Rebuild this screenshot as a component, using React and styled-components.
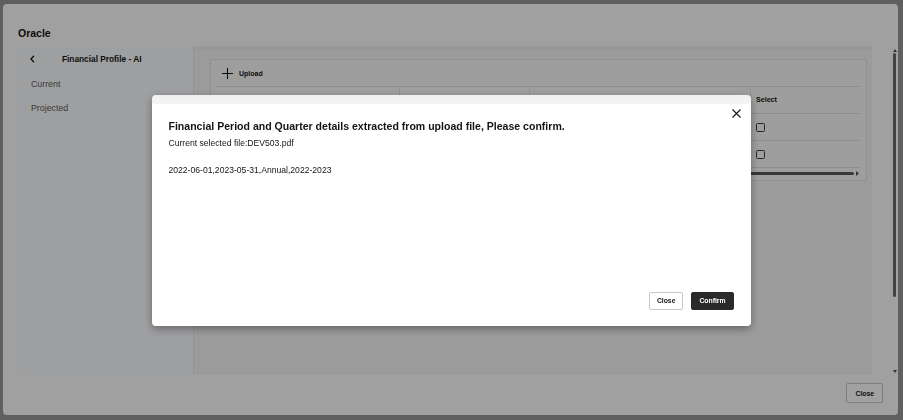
import React from "react";
import styled, { createGlobalStyle } from "styled-components";

const GlobalStyle = createGlobalStyle`
  html, body {
    margin: 0;
    padding: 0;
  }
  body {
    background: #979797;
    font-family: "Liberation Sans", Arial, sans-serif;
    color: #161513;
  }
  * {
    box-sizing: border-box;
  }
`;

const Screen = styled.div`
  height: 420px;
  padding: 4px 5px 5px 3px;
`;

const Dialog = styled.div`
  height: 100%;
  background: #fffdfd;
  border-radius: 4px;
  display: flex;
  flex-direction: column;
  overflow: hidden;
`;

const DialogHeader = styled.div`
  height: 42px;
  flex-shrink: 0;
  padding: 23px 15px 0;
`;

const DialogTitle = styled.div`
  font-size: 10.5px;
  font-weight: 700;
  line-height: 12px;
`;

const DialogBody = styled.div`
  flex: 1;
  display: flex;
  padding-left: 15px;
  min-height: 0;
`;

const Sidebar = styled.div`
  width: 175px;
  flex-shrink: 0;
  background: #fbfcff;
  padding-top: 4px;
`;

const BackRow = styled.div`
  display: flex;
  align-items: center;
  height: 18px;
  padding-left: 12px;
`;

const BackTitle = styled.div`
  margin-left: 27px;
  font-size: 8.3px;
  font-weight: 700;
`;

const NavItem = styled.div`
  height: 24px;
  display: flex;
  align-items: center;
  padding-left: 13px;
  font-size: 8.8px;
  color: #5e5c5a;
  margin-top: ${(p) => (p.$first ? "4px" : "0")};
`;

const Content = styled.div`
  width: 679px;
  flex-shrink: 0;
  background: #f6f5f5;
  border-left: 1px solid #ebeaea;
  border-top: 4px solid #f2f1f1;
  padding: 9px 5px 0 16px;
`;

const Card = styled.div`
  height: 122px;
  background: #fbfafa;
  border: 1px solid #e6e5e5;
  border-radius: 2px;
  padding: 0 6px 0 5px;
`;

const Toolbar = styled.div`
  height: 26px;
  display: flex;
  align-items: center;
  padding-left: 6px;
  gap: 6px;
`;

const ToolLabel = styled.span`
  font-size: 7px;
  font-weight: 700;
`;

const Table = styled.div`
  display: grid;
  grid-template-columns: 184px 130px 221px 1fr;
  border-top: 1px solid #e2e1e1;
`;

const Cell = styled.div`
  height: 27px;
  display: flex;
  align-items: center;
  padding-left: 5px;
  border-bottom: 1px solid #e2e1e1;
  border-right: ${(p) => (p.$last ? "none" : "1px solid #e8e7e7")};
  font-size: 7.1px;
  font-weight: 700;
`;

const Checkbox = styled.span`
  width: 9px;
  height: 9px;
  border: 1px solid #3d3c3b;
  border-radius: 1.5px;
`;

const HScroll = styled.div`
  display: flex;
  align-items: center;
  justify-content: flex-end;
  height: 10px;
  gap: 2px;
`;

const HThumb = styled.div`
  width: 330px;
  height: 3px;
  background: #5a5958;
  border-radius: 2px;
`;

const Gutter = styled.div`
  flex: 1;
  display: flex;
  justify-content: flex-end;
  padding-right: 1px;
`;

const VScroll = styled.div`
  width: 5px;
  display: flex;
  flex-direction: column;
  align-items: center;
  padding-top: 3px;
`;

const VThumb = styled.div`
  width: 3px;
  height: 244px;
  margin-top: 1px;
  background: #6b6a69;
  border-radius: 2px;
`;

const Arrow = styled.div`
  width: 0;
  height: 0;
  border-left: 2px solid transparent;
  border-right: 2px solid transparent;
  ${(p) =>
    p.$down
      ? "border-top: 3px solid #555; margin-top: auto; margin-bottom: 2px;"
      : "border-bottom: 3px solid #555;"}
`;

const Footer = styled.div`
  height: 40px;
  flex-shrink: 0;
  display: flex;
  justify-content: flex-end;
  align-items: flex-start;
  padding: 8px 15px 0 0;
`;

const Button = styled.button`
  height: ${(p) => (p.$tall ? "20px" : "18px")};
  padding: 0 ${(p) => (p.$tall ? "8px" : "7px")};
  border-radius: 2px;
  border: 1px solid ${(p) => (p.$primary ? "#2b2a29" : "#c9c7c6")};
  background: ${(p) => (p.$primary ? "#2b2a29" : "#ffffff")};
  color: ${(p) => (p.$primary ? "#ffffff" : "#161513")};
  font-family: "Liberation Sans", Arial, sans-serif;
  font-size: 6.8px;
  font-weight: 700;
  cursor: pointer;
`;

const Overlay = styled.div`
  position: fixed;
  inset: 0;
  background: rgba(0, 0, 0, 0.37);
  display: flex;
  align-items: center;
  justify-content: center;
`;

const Modal = styled.div`
  position: relative;
  width: 599px;
  height: 231px;
  margin-left: -1px;
  background: linear-gradient(#f1f0f0 0, #f4f3f3 8px, #ffffff 10px);
  border-radius: 4px;
  box-shadow: 0 3px 8px rgba(0, 0, 0, 0.35);
  display: flex;
  flex-direction: column;
  padding: 24px 17px 16px 17px;
`;

const CloseX = styled.button`
  position: absolute;
  top: 14px;
  right: 9px;
  width: 10px;
  height: 10px;
  padding: 0;
  border: none;
  background: none;
  display: flex;
  cursor: pointer;
`;

const ModalTitle = styled.div`
  font-size: 10.55px;
  font-weight: 700;
  line-height: 14px;
`;

const ModalText = styled.div`
  font-size: 8.6px;
  line-height: 12px;
  margin-top: ${(p) => p.$gap || "0"};
`;

const ModalActions = styled.div`
  margin-top: auto;
  display: flex;
  justify-content: flex-end;
  gap: 8px;
`;

const rows = [1, 2];

export default function App() {
  return (
    <>
      <GlobalStyle />
      <Screen>
        <Dialog>
          <DialogHeader>
            <DialogTitle>Oracle</DialogTitle>
          </DialogHeader>
          <DialogBody>
            <Sidebar>
              <BackRow>
                <svg width="5" height="8" viewBox="0 0 5 8">
                  <polyline points="4,0.8 1,4 4,7.2" fill="none" stroke="#161513" strokeWidth="1.3" />
                </svg>
                <BackTitle>Financial Profile - AI</BackTitle>
              </BackRow>
              <NavItem $first>Current</NavItem>
              <NavItem>Projected</NavItem>
            </Sidebar>
            <Content>
              <Card>
                <Toolbar>
                  <svg width="11" height="11" viewBox="0 0 11 11">
                    <path d="M5.5 0v11M0 5.5h11" stroke="#161513" strokeWidth="1.1" />
                  </svg>
                  <ToolLabel>Upload</ToolLabel>
                </Toolbar>
                <Table>
                  <Cell />
                  <Cell />
                  <Cell />
                  <Cell $last>Select</Cell>
                  {rows.map((r) => (
                    <React.Fragment key={r}>
                      <Cell />
                      <Cell />
                      <Cell />
                      <Cell $last>
                        <Checkbox />
                      </Cell>
                    </React.Fragment>
                  ))}
                </Table>
                <HScroll>
                  <HThumb />
                  <svg width="4" height="5" viewBox="0 0 4 5">
                    <path d="M0 0l3 2.5L0 5z" fill="#555" />
                  </svg>
                </HScroll>
              </Card>
            </Content>
            <Gutter>
              <VScroll>
                <Arrow />
                <VThumb />
                <Arrow $down />
              </VScroll>
            </Gutter>
          </DialogBody>
          <Footer>
            <Button $tall>Close</Button>
          </Footer>
        </Dialog>
      </Screen>

      <Overlay>
        <Modal>
          <CloseX aria-label="Close">
            <svg width="9" height="9" viewBox="0 0 9 9">
              <path d="M0.5 0.5l8 8M8.5 0.5l-8 8" stroke="#161513" strokeWidth="1.1" />
            </svg>
          </CloseX>
          <ModalTitle>Financial Period and Quarter details extracted from upload file, Please confirm.</ModalTitle>
          <ModalText $gap="4px">Current selected file:DEV503.pdf</ModalText>
          <ModalText $gap="15px">2022-06-01,2023-05-31,Annual,2022-2023</ModalText>
          <ModalActions>
            <Button>Close</Button>
            <Button $primary>Confirm</Button>
          </ModalActions>
        </Modal>
      </Overlay>
    </>
  );
}
